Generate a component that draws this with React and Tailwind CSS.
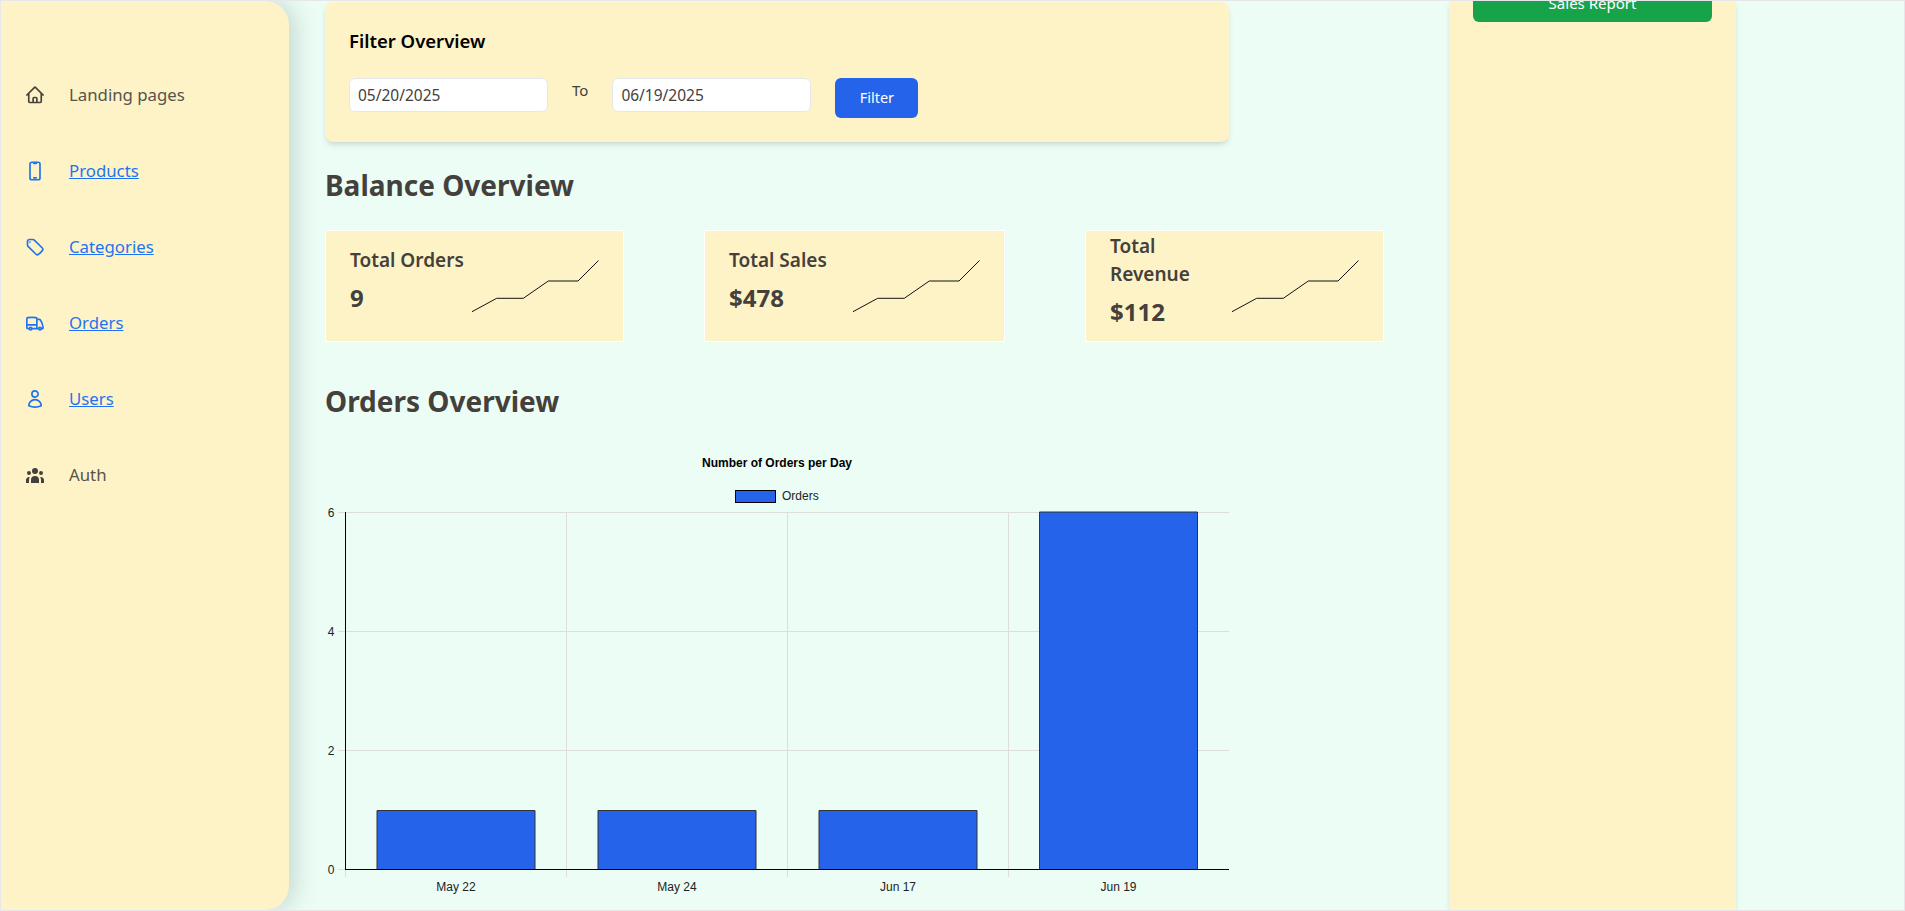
import {
  HiOutlineHome,
  HiOutlineDevicePhoneMobile,
  HiOutlineTag,
  HiOutlineTruck,
  HiOutlineUser,
} from "react-icons/hi2";
import { HiUserGroup } from "react-icons/hi";

const NAV = [
  { label: "Landing pages", Icon: HiOutlineHome },
  { label: "Products", Icon: HiOutlineDevicePhoneMobile, link: true },
  { label: "Categories", Icon: HiOutlineTag, link: true },
  { label: "Orders", Icon: HiOutlineTruck, link: true },
  { label: "Users", Icon: HiOutlineUser, link: true },
  { label: "Auth", Icon: HiUserGroup },
];

const STATS = [
  { title: "Total Orders", value: "9", width: "w-[299px]" },
  { title: "Total Sales", value: "$478", width: "w-[301px]" },
  { title: "Total\nRevenue", value: "$112", width: "w-[299px]" },
];

const BARS = [
  { x: 377, y: 810.5, label: "May 22" },
  { x: 598, y: 810.5, label: "May 24" },
  { x: 819, y: 810.5, label: "Jun 17" },
  { x: 1039.5, y: 512, label: "Jun 19" },
];

function Sidebar() {
  return (
    <aside className="z-10 w-[288px] shrink-0 rounded-r-3xl bg-amber-100 pl-6 pt-[56px] shadow-[6px_0_24px_rgba(60,90,80,0.22)]">
      {NAV.map(({ label, Icon, link }) => (
        <div key={label} className="flex h-[76px] items-center gap-6">
          <span className="flex w-5 justify-center">
            <Icon size={label === "Auth" ? 22 : 20} className={link ? "text-[#1f73f1]" : "text-stone-700"} style={label === "Auth" ? undefined : { strokeWidth: 2 }} />
          </span>
          {link ? <a href="#" className="text-[16.8px] text-[#1f73f1] underline">{label}</a> : <span className="text-[16.8px] text-stone-600">{label}</span>}
        </div>
      ))}
    </aside>
  );
}

function Sparkline() {
  return (
    <svg width="127" height="52" viewBox="0 0 127 52" className="ml-auto shrink-0">
      <polyline points="0,51.7 24.7,38.3 51.3,38.3 76.3,21 106,21 126.5,0.5" fill="none" stroke="#111" strokeWidth="1" />
    </svg>
  );
}

function StatCard({ title, value, width }) {
  return (
    <div className={`flex h-[112px] items-center border border-white bg-amber-100 pl-6 pr-6 ${width}`}>
      <div>
        <div className="mb-2 whitespace-pre-line text-[19px] font-semibold leading-7 text-stone-700">{title}</div>
        <div className="mb-3 text-2xl font-bold leading-8 text-stone-700">{value}</div>
      </div>
      <Sparkline />
    </div>
  );
}

function OrdersChart() {
  const font = { fontFamily: '"Liberation Sans", Arial, sans-serif', fontSize: 12 };
  return (
    <svg width="910" height="471" viewBox="325 440 910 471" className="mt-[21px] block shrink-0" style={font}>
      <text x="777" y="467" textAnchor="middle" fontWeight="700" fill="#000">Number of Orders per Day</text>
      <rect x="735.5" y="490.5" width="40" height="12" fill="#2563eb" stroke="#000" />
      <text x="782" y="500" fill="#222">Orders</text>
      {[512, 631, 750, 869].map((y, i) => (
        <g key={y}>
          <line x1="338" x2="1229" y1={y + 0.5} y2={y + 0.5} stroke="#ddd" />
          <text x="334.5" y={y + 4.5} textAnchor="end" fill="#222">{6 - i * 2}</text>
        </g>
      ))}
      {[566.5, 787.5, 1008.5].map((x) => (
        <line key={x} x1={x} x2={x} y1="512" y2="877" stroke="#ddd" />
      ))}
      <line x1="345.5" x2="345.5" y1="869" y2="877" stroke="#ddd" />
      {BARS.map((b) => (
        <g key={b.label}>
          <rect x={b.x} y={b.y} width="158" height={869 - b.y} fill="#2563eb" />
          <path d={`M${b.x} 869V${b.y}H${b.x + 158}V869`} fill="none" stroke="#333" strokeWidth="1" />
          <text x={b.x + 79} y="890.5" textAnchor="middle" fill="#222">{b.label}</text>
        </g>
      ))}
      <line x1="345.5" x2="345.5" y1="512" y2="870" stroke="#000" />
      <line x1="345" x2="1229" y1="869.5" y2="869.5" stroke="#000" />
    </svg>
  );
}

export default function App() {
  return (
    <div className="flex h-[911px] overflow-hidden border border-gray-200 bg-emerald-50 font-['Noto_Sans','Liberation_Sans',sans-serif]">
      <Sidebar />
      <main className="ml-[36px] flex w-[1124px] shrink-0 flex-col pt-px">
        <section className="h-[140px] w-[904px] shrink-0 rounded-lg bg-amber-100 px-6 pt-[25px] shadow-md">
          <h2 className="text-[18.5px] font-semibold leading-7 text-black">Filter Overview</h2>
          <div className="mt-[23px] flex items-start gap-6">
            <input readOnly defaultValue="05/20/2025" className="h-[34px] w-[199px] rounded-md border border-gray-200 bg-white px-2 text-[15.5px] text-stone-700" />
            <span className="mt-[2px] text-[15px] leading-5 text-stone-700">To</span>
            <input readOnly defaultValue="06/19/2025" className="h-[34px] w-[199px] rounded-md border border-gray-200 bg-white px-2 text-[15.5px] text-stone-700" />
            <button className="h-10 w-[83px] rounded-md bg-[#2563eb] text-[14.5px] text-white">Filter</button>
          </div>
        </section>
        <h1 className="mt-[25px] text-[28px] font-bold leading-9 text-stone-700">Balance Overview</h1>
        <div className="mt-[27px] flex gap-[80px]">
          {STATS.map((s) => <StatCard key={s.title} {...s} />)}
        </div>
        <h1 className="mt-[41px] text-[28px] font-bold leading-9 text-stone-700">Orders Overview</h1>
        <OrdersChart />
      </main>
      <div className="w-[287px] shrink-0 bg-amber-100 px-6 shadow-md">
        <button className="-mt-[17px] block h-[38px] w-[239px] rounded-md bg-[#16a34a] text-[15px] text-white">Sales Report</button>
      </div>
    </div>
  );
}
